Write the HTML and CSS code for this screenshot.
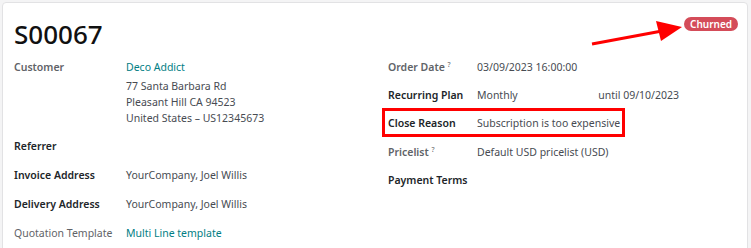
FILE: index.html
```html
<!DOCTYPE html>
<html>
<head>
<meta charset="utf-8">
<link rel="stylesheet" href="styles.css">
</head>
<body>
<div class="sheet">
  <div class="status"><span class="badge">Churned</span></div>
  <svg class="arrow" width="751" height="248" viewBox="0 0 751 248">
    <line x1="592" y1="44" x2="662" y2="31" stroke="#f00" stroke-width="3"/>
    <polygon points="682,27 656,21 661,41" fill="#f00"/>
  </svg>
  <h1 class="title">S00067</h1>
  <div class="groups">
    <div class="group left">
      <div class="row">
        <div class="label muted">Customer</div>
        <div class="value">
          <a class="link">Deco Addict</a>
          <div class="addr">77 Santa Barbara Rd<br>Pleasant Hill CA 94523<br>United States – US12345673</div>
        </div>
      </div>
      <div class="row"><div class="label">Referrer</div><div class="value"></div></div>
      <div class="row"><div class="label">Invoice Address</div><div class="value">YourCompany, Joel Willis</div></div>
      <div class="row"><div class="label">Delivery Address</div><div class="value">YourCompany, Joel Willis</div></div>
      <div class="row"><div class="label muted light">Quotation Template</div><div class="value"><a class="link">Multi Line template</a></div></div>
    </div>
    <div class="group right">
      <div class="row"><div class="label muted">Order Date <sup>?</sup></div><div class="value">03/09/2023 16:00:00</div></div>
      <div class="row"><div class="label">Recurring Plan</div><div class="value split"><span>Monthly</span><span class="until">until 09/10/2023</span></div></div>
      <div class="row boxed"><div class="label">Close Reason</div><div class="value">Subscription is too expensive</div></div>
      <div class="row"><div class="label muted">Pricelist <sup>?</sup></div><div class="value">Default USD pricelist (USD)</div></div>
      <div class="row"><div class="label">Payment Terms</div><div class="value"></div></div>
    </div>
  </div>
</div>
</body>
</html>
```
FILE: styles.css
```css
html, body { margin: 0; padding: 0; }
body {
  background: #f4f4f5;
  font-family: "Noto Sans", "Open Sans", sans-serif;
  font-size: 10.5px;
  color: #474b52;
  width: 751px;
  height: 248px;
  overflow: hidden;
}
.sheet {
  position: relative;
  margin: 2px 0 0 2px;
  width: 746px;
  height: 260px;
  background: #fff;
  border: 1px solid #e2e2e4;
  border-radius: 4px;
  padding: 0 0 0 11px;
  box-sizing: border-box;
}
.status {
  position: absolute;
  top: 14px;
  right: 9px;
}
.badge {
  display: inline-block;
  background: #d44c59;
  color: #fff;
  font-weight: 600;
  font-size: 10px;
  line-height: 14px;
  padding: 0 6px;
  border-radius: 7px;
}
.arrow { position: absolute; left: -3px; top: -3px; pointer-events: none; }
.title {
  margin: 0;
  padding-top: 13px;
  font-size: 26px;
  line-height: 36px;
  font-weight: 500;
  color: #111;
  height: 40px;
}
.groups { display: flex; margin-top: -2px; }
.group { display: flex; flex-direction: column; }
.left { width: 374px; }
.right { width: 340px; }
.row { display: flex; min-height: 29px; align-items: flex-start; white-space: nowrap; }
.right .row { min-height: 28px; }
.row .label { padding-top: 5px; line-height: 16px; font-weight: 600; color: #212529; flex: none; }
.row .value { padding-top: 5px; line-height: 16px; }
.left .label { width: 112px; }
.right .label { width: 89px; }
.label.muted { color: #5f6368; font-weight: 600; }
.label.light { font-weight: 400; }
.label sup { font-size: 7px; font-weight: 400; vertical-align: 4px; line-height: 0; }
.left .row:first-child { margin-bottom: 7px; }
.link { color: #017e84; text-decoration: none; }
.addr { margin-top: 3px; }
.split { display: flex; width: 202px; justify-content: space-between; }
.right .boxed {
  margin: -2px 0 2px -6px;
  padding-left: 3px;
  width: 243px;
  border: 3px solid #f00;
  box-sizing: border-box;
  min-height: 29px;
}
.boxed .label { padding-top: 4px; }
.boxed .value { padding-top: 4px; }
```
